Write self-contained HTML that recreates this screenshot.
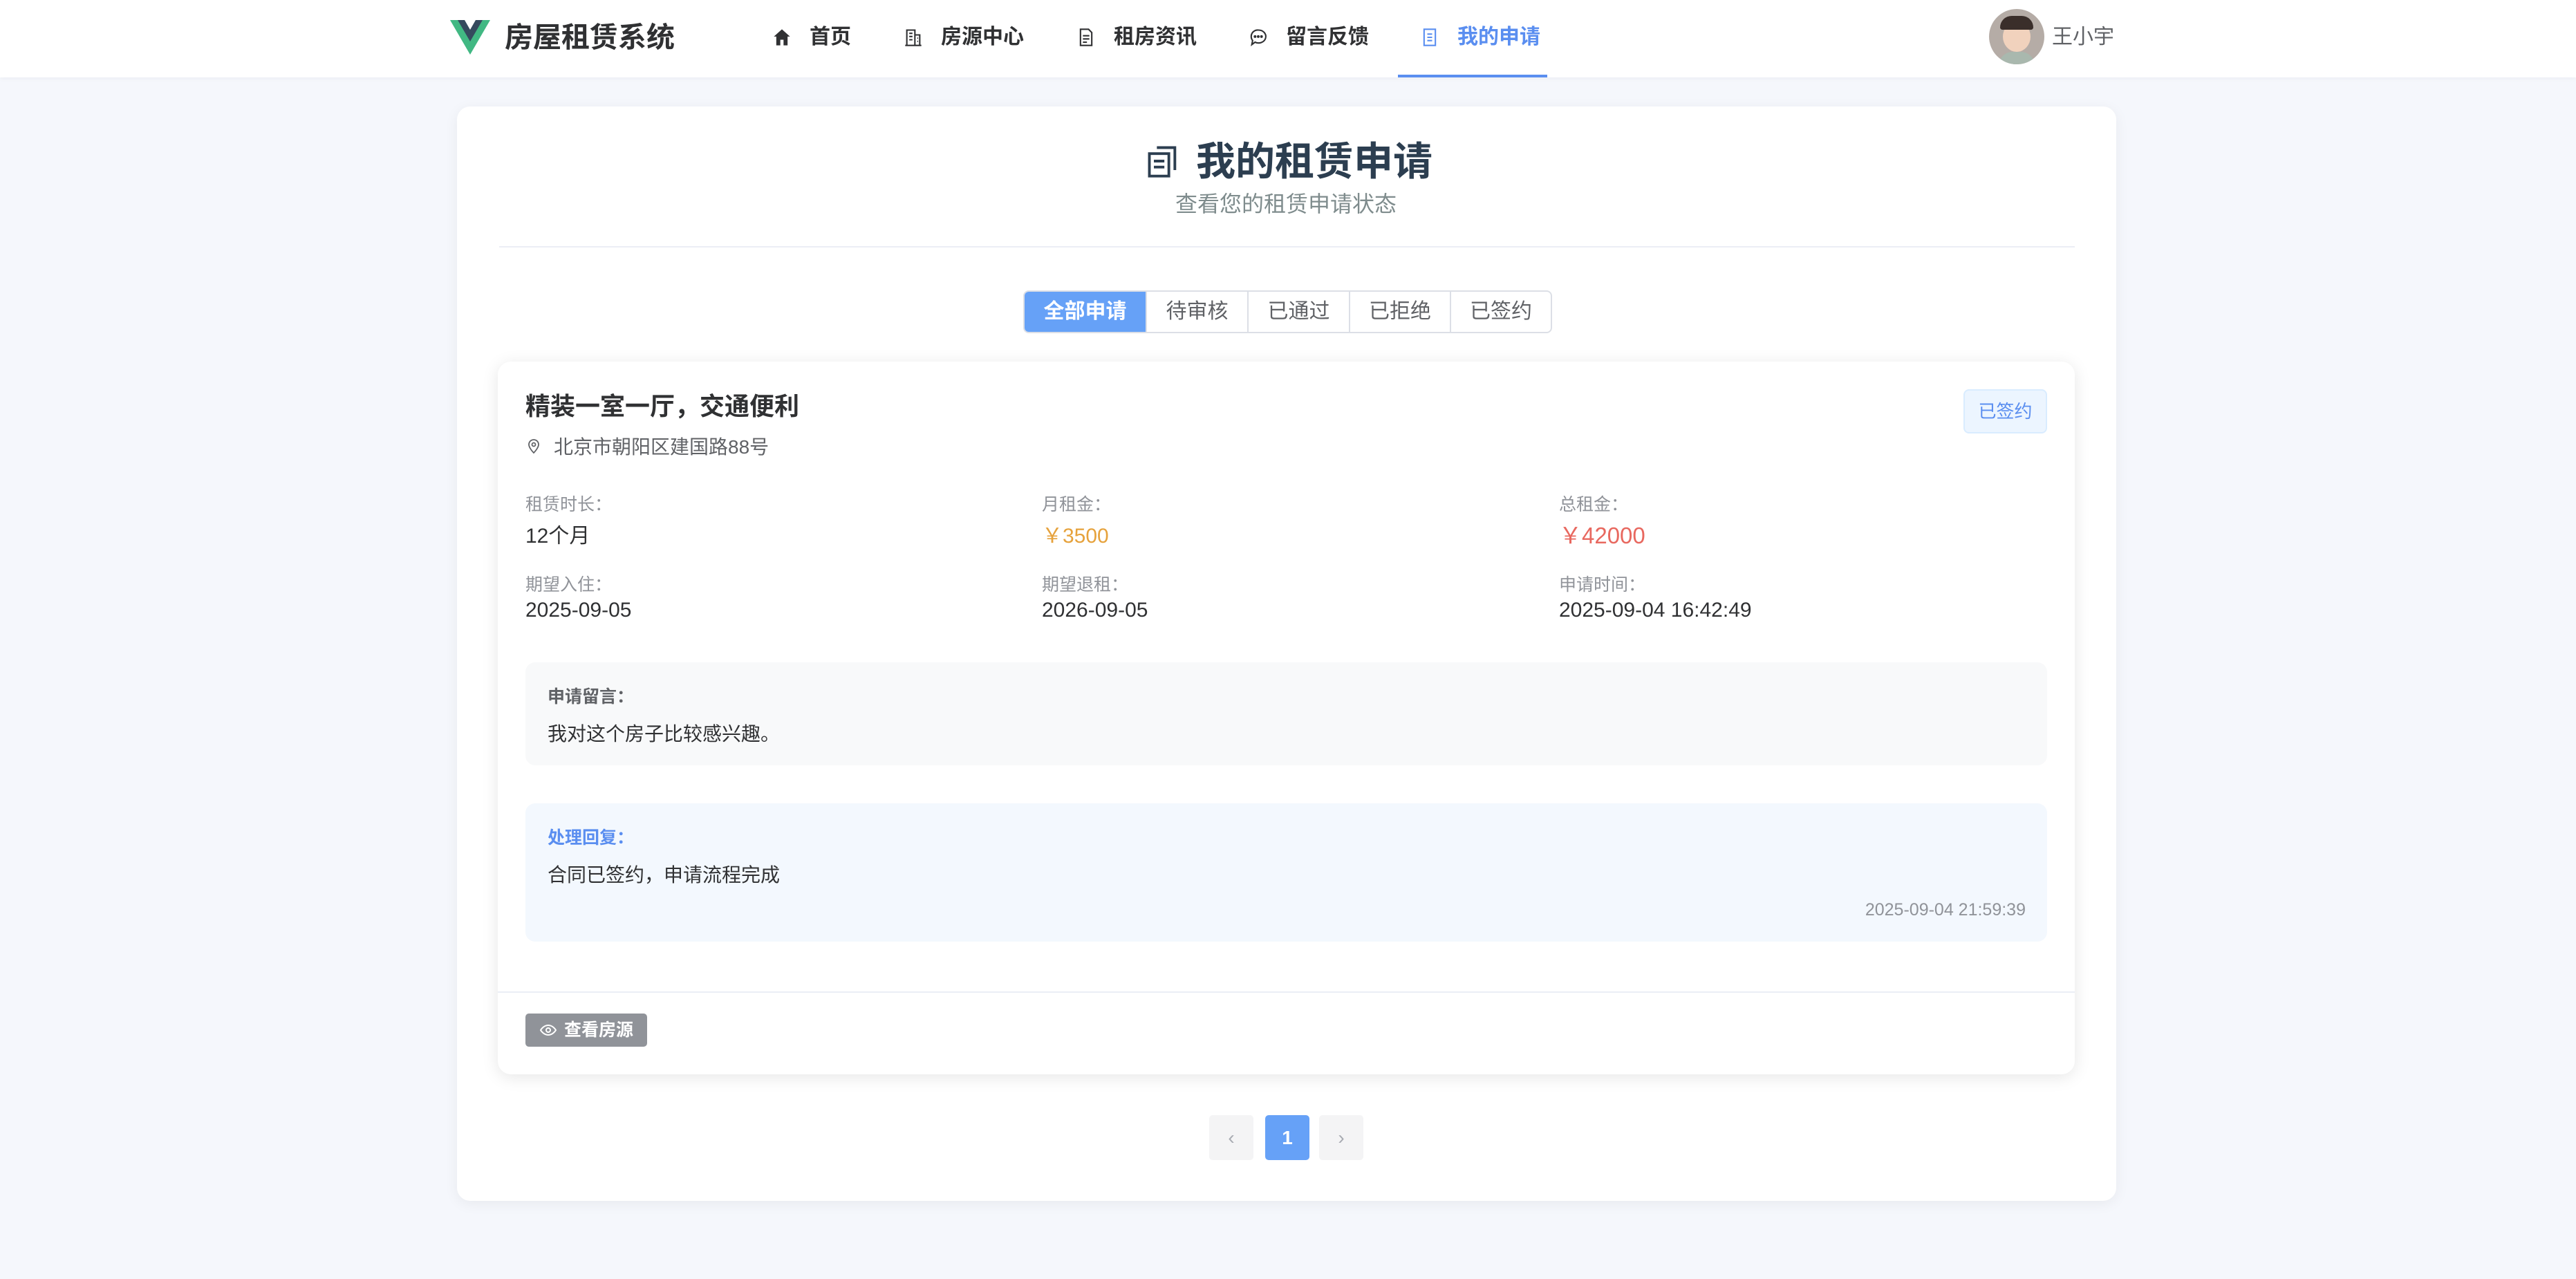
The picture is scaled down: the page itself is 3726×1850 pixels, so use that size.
<!DOCTYPE html>
<html><head><meta charset="utf-8"><style>
*{margin:0;padding:0;box-sizing:border-box}
body{width:3726px;height:1850px;background:#f5f7fc;font-family:"Liberation Sans","Noto Sans CJK SC",sans-serif;position:relative;overflow:hidden;color:#303133}
.a{position:absolute;white-space:nowrap}
.nav{position:absolute;left:0;top:0;width:3726px;height:112px;background:#fff;box-shadow:0 2px 6px rgba(0,0,0,.04)}
.ni{position:absolute;top:34px;font-size:30px;font-weight:600;color:#303133;line-height:40px}
.ni svg{position:absolute;left:-54px;top:6px}
.card{position:absolute;left:661px;top:154px;width:2400px;height:1583px;background:#fff;border-radius:19px;box-shadow:0 4px 20px rgba(0,0,0,.06)}
.tabs{position:absolute;left:1480px;top:420px;height:62px;display:flex;border:2px solid #dcdfe6;border-radius:8px;overflow:hidden}
.tabs div{height:58px;line-height:58px;font-size:30px;color:#606266;border-left:2px solid #dcdfe6;text-align:center}
.tabs div.on{background:#66a1f7;color:#fff;font-weight:600;border-left:none}
.app{position:absolute;left:720px;top:523px;width:2281px;height:1031px;background:#fff;border-radius:19px;box-shadow:0 4px 24px rgba(0,0,0,.1)}
.lb{font-size:25px;color:#909399}
.vl{font-size:30px;color:#303133}
.pg{position:absolute;top:1613px;width:64px;height:65px;background:#f4f4f5;border-radius:5px;text-align:center;line-height:65px;font-size:28px;color:#a8abb2}
</style></head><body>
<div class="nav">
<svg class="a" style="left:651px;top:29px" width="58" height="50" viewBox="0 0 58 50"><path d="M0 0h12l17 30L46 0h12L29 50z" fill="#41b883"/><path d="M11 0h10l8 14 8-14h10L29 31z" fill="#35495e"/></svg>
<div class="a" style="left:730px;top:29px;font-size:41px;font-weight:700;color:#303133;line-height:50px">房屋租赁系统</div>
<div class="ni" style="left:1171px"><svg width="28" height="28" viewBox="0 0 24 24"><path d="M12 2 2 11h3v11h5v-7h4v7h5V11h3z" fill="#303133"/></svg>首页</div>
<div class="ni" style="left:1361px"><svg width="28" height="28" viewBox="0 0 24 24" fill="none" stroke="#303133" stroke-width="1.8"><path d="M4 22V3h10v19M14 9h6v13M2 22h20M7 7h4M7 11h4M7 15h4M17 13h1M17 17h1"/></svg>房源中心</div>
<div class="ni" style="left:1611px"><svg width="28" height="28" viewBox="0 0 24 24" fill="none" stroke="#303133" stroke-width="1.8"><path d="M5 2h10l4 4v16H5zM8 10h8M8 14h8M8 18h5"/></svg>租房资讯</div>
<div class="ni" style="left:1860px"><svg width="28" height="28" viewBox="0 0 24 24" fill="none" stroke="#303133" stroke-width="1.8"><path d="M12 3a9 8 0 1 1-4 15l-4 3 1-5a8 8 0 0 1 7-13z"/><circle cx="8" cy="11" r=".8" fill="#303133"/><circle cx="12" cy="11" r=".8" fill="#303133"/><circle cx="16" cy="11" r=".8" fill="#303133"/></svg>留言反馈</div>
<div class="ni" style="left:2108px;color:#5a8ef0"><svg width="28" height="28" viewBox="0 0 24 24" fill="none" stroke="#5a8ef0" stroke-width="1.8"><path d="M5 2h14v20H5zM9 8h6M9 12h6M9 16h6"/></svg>我的申请</div>
<div class="a" style="left:2022px;top:108px;width:216px;height:4px;background:#5a8ef0"></div>
<div class="a" style="left:2877px;top:13px;width:80px;height:80px;border-radius:50%;background:#b5aca6;overflow:hidden"><div class="a" style="left:20px;top:18px;width:40px;height:44px;border-radius:50%;background:#f1d2bd"></div><div class="a" style="left:16px;top:10px;width:48px;height:20px;border-radius:20px 20px 4px 4px;background:#3a2e2a"></div><div class="a" style="left:14px;top:62px;width:52px;height:30px;border-radius:20px 20px 0 0;background:#a9b8ae"></div></div>
<div class="a" style="left:2968px;top:34px;font-size:30px;color:#606266;line-height:40px">王小宇</div>
</div>

<div class="card"></div>
<svg class="a" style="left:1656px;top:207px" width="52" height="52" viewBox="0 0 24 24" fill="none" stroke="#2c3e50" stroke-width="1.8"><path d="M8 3h12v15M3 7h13v15H3zM6 12h7M6 16h7"/></svg>
<div class="a" style="left:1730px;top:200px;font-size:57px;font-weight:700;color:#2c3e50;line-height:68px">我的租赁申请</div>
<div class="a" style="left:1700px;top:274px;font-size:32px;color:#7f8c8d;line-height:42px">查看您的租赁申请状态</div>
<div class="a" style="left:722px;top:356px;width:2279px;height:2px;background:#ebeef5"></div>
<div class="tabs"><div class="on" style="width:175px">全部申请</div><div style="width:147px">待审核</div><div style="width:147px">已通过</div><div style="width:146px">已拒绝</div><div style="width:146px">已签约</div></div>

<div class="app"></div>
<div class="a" style="left:760px;top:565px;font-size:36px;font-weight:700;color:#303133;line-height:46px">精装一室一厅，交通便利</div>
<div class="a" style="left:2840px;top:563px;width:121px;height:64px;background:#ecf5ff;border:2px solid #d9ecff;border-radius:8px;text-align:center;line-height:60px;font-size:26px;color:#5a8ef0">已签约</div>
<svg class="a" style="left:760px;top:632px" width="24" height="26" viewBox="0 0 24 24" fill="none" stroke="#606266" stroke-width="1.8"><path d="M12 22s7-7 7-12a7 7 0 0 0-14 0c0 5 7 12 7 12z"/><circle cx="12" cy="10" r="2.5"/></svg>
<div class="a" style="left:801px;top:627px;font-size:28px;color:#606266;line-height:40px">北京市朝阳区建国路88号</div>

<div class="a lb" style="left:760px;top:710px">租赁时长：</div>
<div class="a vl" style="left:760px;top:750px">12个月</div>
<div class="a lb" style="left:1507px;top:710px">月租金：</div>
<div class="a vl" style="left:1507px;top:750px;color:#e6a23c">￥3500</div>
<div class="a lb" style="left:2255px;top:710px">总租金：</div>
<div class="a vl" style="left:2255px;top:748px;color:#e8685f;font-size:33px">￥42000</div>
<div class="a lb" style="left:760px;top:826px">期望入住：</div>
<div class="a vl" style="left:760px;top:866px">2025-09-05</div>
<div class="a lb" style="left:1507px;top:826px">期望退租：</div>
<div class="a vl" style="left:1507px;top:866px">2026-09-05</div>
<div class="a lb" style="left:2255px;top:826px">申请时间：</div>
<div class="a vl" style="left:2255px;top:866px">2025-09-04 16:42:49</div>

<div class="a" style="left:760px;top:958px;width:2201px;height:149px;background:#f8f9fa;border-radius:14px"></div>
<div class="a" style="left:792px;top:988px;font-size:25px;font-weight:700;color:#606266">申请留言：</div>
<div class="a" style="left:792px;top:1040px;font-size:28px">我对这个房子比较感兴趣。</div>

<div class="a" style="left:760px;top:1162px;width:2201px;height:200px;background:#f3f8fe;border-radius:14px"></div>
<div class="a" style="left:792px;top:1192px;font-size:25px;font-weight:700;color:#5a8ef0">处理回复：</div>
<div class="a" style="left:792px;top:1244px;font-size:28px">合同已签约，申请流程完成</div>
<div class="a" style="right:796px;top:1302px;font-size:25px;color:#909399">2025-09-04 21:59:39</div>

<div class="a" style="left:720px;top:1434px;width:2281px;height:2px;background:#ebeef5"></div>
<div class="a" style="left:760px;top:1466px;width:176px;height:48px;background:#909399;border-radius:5px;color:#fff;font-size:25px;font-weight:700;line-height:48px;padding-left:56px">查看房源</div>
<svg class="a" style="left:781px;top:1480px" width="24" height="20" viewBox="0 0 24 20" fill="none" stroke="#fff" stroke-width="2"><path d="M1 10s4-7 11-7 11 7 11 7-4 7-11 7S1 10 1 10z"/><circle cx="12" cy="10" r="3"/></svg>

<div class="pg" style="left:1749px">‹</div>
<div class="pg" style="left:1830px;background:#66a1f7;color:#fff;font-weight:700">1</div>
<div class="pg" style="left:1908px">›</div>
</body></html>
